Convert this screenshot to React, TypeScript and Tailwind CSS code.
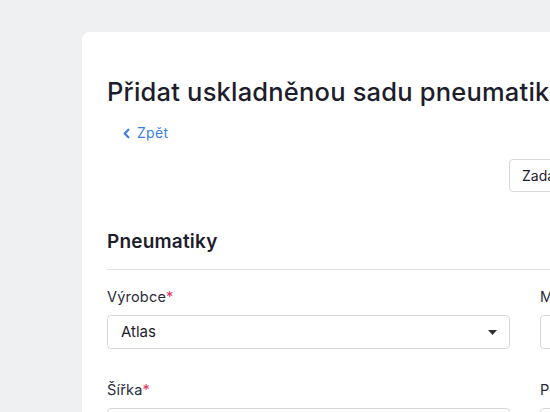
import React from 'react';
import { ChevronLeft } from 'lucide-react';

const font = { fontFamily: '"Inter", "Open Sans", sans-serif' };

const Label: React.FC<{ text: string }> = ({ text }) => (
  <label className="block text-[14.5px] text-[#2b2b3a] mb-[8px] leading-[20px] tracking-[0.2px]">
    {text}
    <span className="text-[#e5365b]">*</span>
  </label>
);

export default function App() {
  return (
    <div className="w-[550px] h-[412px] overflow-hidden bg-[#eff0f2] pl-[82px] pt-[32px]" style={font}>
      <div className="w-[900px] h-[420px] bg-white rounded-tl-[8px] pl-[25px] pt-[45px]">
        <h1 className="text-[25.5px] leading-[30px] font-medium text-[#1d1d2c] tracking-[0.2px] whitespace-nowrap">
          Přidat uskladněnou sadu pneumatik
        </h1>
        <a href="#" className="mt-[16px] ml-[12px] flex items-center gap-[3px] text-[14px] leading-[20px] text-[#3d7fe0] tracking-[0.3px]">
          <ChevronLeft size={15} strokeWidth={3.5} />
          Zpět
        </a>

        <div className="mt-[16px] flex">
          <button className="ml-[402px] h-[33px] px-[12px] border border-[#d6d8dc] rounded-[4px] text-[14px] text-[#1d1d2c] bg-white whitespace-nowrap">
            Zadat ručně
          </button>
        </div>

        <h2 className="mt-[38px] text-[19px] leading-[24px] font-semibold text-[#1d1d2c] tracking-[0.2px]">Pneumatiky</h2>
        <div className="mt-[15px] h-px w-[836px] bg-[#dfe0e3]" />

        <div className="mt-[17px] grid grid-cols-[403px_403px] gap-x-[30px] gap-y-[31px]">
          <div>
            <Label text="Výrobce" />
            <div className="h-[34px] border border-[#d6d8dc] rounded-[4px] flex items-center justify-between pl-[13px] pr-[12px]">
              <span className="text-[15px] text-[#1d1d2c]">Atlas</span>
              <svg width="9" height="5" viewBox="0 0 9 5"><path d="M0 0h9L4.5 5z" fill="#333" /></svg>
            </div>
          </div>
          <div>
            <Label text="Model" />
            <div className="h-[34px] border border-[#d6d8dc] rounded-[4px]" />
          </div>
          <div>
            <Label text="Šířka" />
            <div className="h-[34px] border border-[#d6d8dc] rounded-[4px]" />
          </div>
          <div>
            <Label text="Profil" />
            <div className="h-[34px] border border-[#d6d8dc] rounded-[4px]" />
          </div>
        </div>
      </div>
    </div>
  );
}
